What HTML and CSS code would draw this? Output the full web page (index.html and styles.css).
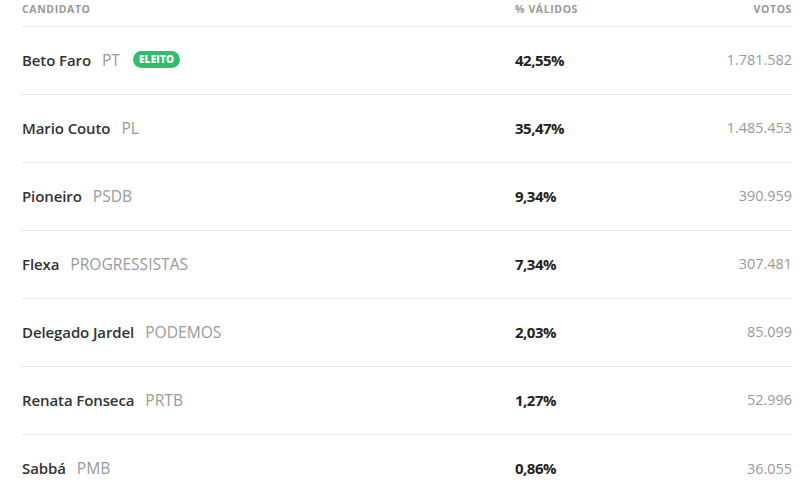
FILE: index.html
```html
<!DOCTYPE html>
<html lang="pt-BR">
<head>
<meta charset="utf-8">
<link rel="stylesheet" href="styles.css">
</head>
<body>
<div class="table">
  <div class="row head">
    <div class="c-name">CANDIDATO</div>
    <div class="c-pct">% VÁLIDOS</div>
    <div class="c-votes">VOTOS</div>
  </div>
  <div class="row">
    <div class="c-name"><span class="name">Beto Faro</span><span class="party">PT</span><span class="badge">ELEITO</span></div>
    <div class="c-pct pct">42,55%</div>
    <div class="c-votes votes">1.781.582</div>
  </div>
  <div class="row">
    <div class="c-name"><span class="name">Mario Couto</span><span class="party">PL</span></div>
    <div class="c-pct pct">35,47%</div>
    <div class="c-votes votes">1.485.453</div>
  </div>
  <div class="row">
    <div class="c-name"><span class="name">Pioneiro</span><span class="party">PSDB</span></div>
    <div class="c-pct pct">9,34%</div>
    <div class="c-votes votes">390.959</div>
  </div>
  <div class="row">
    <div class="c-name"><span class="name">Flexa</span><span class="party">PROGRESSISTAS</span></div>
    <div class="c-pct pct">7,34%</div>
    <div class="c-votes votes">307.481</div>
  </div>
  <div class="row">
    <div class="c-name"><span class="name">Delegado Jardel</span><span class="party">PODEMOS</span></div>
    <div class="c-pct pct">2,03%</div>
    <div class="c-votes votes">85.099</div>
  </div>
  <div class="row">
    <div class="c-name"><span class="name">Renata Fonseca</span><span class="party">PRTB</span></div>
    <div class="c-pct pct">1,27%</div>
    <div class="c-votes votes">52.996</div>
  </div>
  <div class="row">
    <div class="c-name"><span class="name">Sabbá</span><span class="party">PMB</span></div>
    <div class="c-pct pct">0,86%</div>
    <div class="c-votes votes">36.055</div>
  </div>
</div>
</body>
</html>
```
FILE: styles.css
```css
html, body {
  margin: 0;
  padding: 0;
  background: #fff;
}
body {
  font-family: "Open Sans", "Liberation Sans", sans-serif;
  color: #333;
}
.table {
  padding: 0 12px 0 22px;
}
.row {
  box-sizing: border-box;
  display: grid;
  grid-template-columns: 493px 1fr auto;
  align-items: center;
  height: 68px;
  padding-bottom: 2px;
  border-bottom: 1px solid #e6e6e6;
}
.row:last-child {
  border-bottom: none;
}
.row.head {
  height: 27px;
  padding-bottom: 0;
  align-items: start;
}
.head > div {
  font-family: "Open Sans", "Liberation Sans", sans-serif;
  font-size: 10.5px;
  font-weight: 700;
  color: #999;
  letter-spacing: 0.6px;
  line-height: 18px;
}
.c-votes {
  text-align: right;
}
.c-name {
  display: flex;
  align-items: center;
  font-size: 15px;
}
.name {
  font-weight: 600;
  color: #333;
  letter-spacing: -0.1px;
}
.party {
  color: #9a9a9a;
  margin-left: 11px;
  font-weight: 400;
  font-size: 15.6px;
}
.badge {
  margin-left: 13px;
  background: #2ebd6b;
  color: #fff;
  font-size: 10px;
  font-weight: 800;
  border-radius: 9px;
  padding: 0 6px;
  line-height: 17px;
  letter-spacing: 0.2px;
}
.pct {
  font-size: 15px;
  font-weight: 700;
  color: #222;
  letter-spacing: -0.5px;
}
.votes {
  font-size: 14.4px;
  color: #999;
}
```
